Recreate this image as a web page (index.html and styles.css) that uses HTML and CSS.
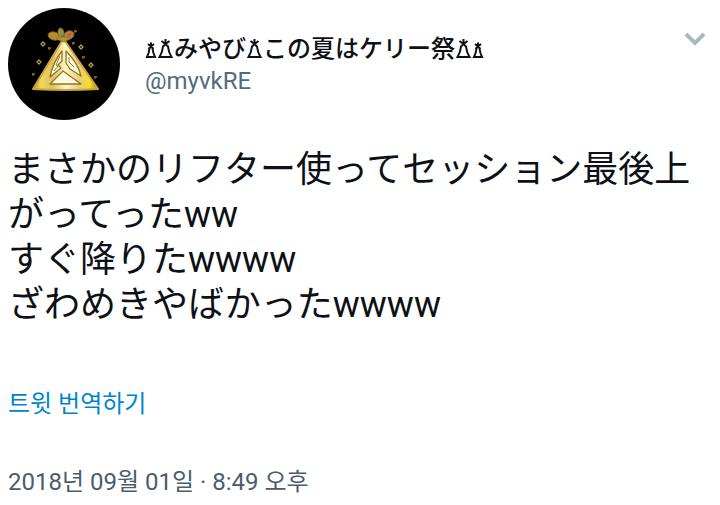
FILE: index.html
```
<!DOCTYPE html>
<html lang="ja">
<head>
    <meta charset="UTF-8">
    <meta name="viewport" content="width=device-width, initial-scale=1">
    <title>Tweet</title>
    <link rel="stylesheet" href="styles.css">
</head>
<body>
    <svg class="defs" aria-hidden="true">
        <symbol id="cone" viewBox="0 0 17 22">
            <path d="M4.5 3L8.5 6L12.5 3M8.5 1V6L5.5 9M8.5 6L11.5 9M6 8.5Q5.5 14 2.5 19H14.5Q11.5 14 11 8.5" />
        </symbol>
        <symbol id="cone-small" viewBox="0 0 12 22">
            <path d="M3 6L6 8.5L9 6M6 4.5V8.5L3.5 11M6 8.5L8.5 11M4.5 10.5Q4 15 2 19H10Q8 15 7.5 10.5" />
        </symbol>
    </svg>
    <article class="tweet">
        <header class="tweet-header">
            <svg class="avatar" viewBox="0 0 112 112" role="img" aria-label="avatar">
                <defs>
                    <linearGradient id="gold" x1="0" x2="1">
                        <stop offset="0" stop-color="#b99116" />
                        <stop offset="0.12" stop-color="#f0d75b" />
                        <stop offset="0.3" stop-color="#e0bf5e" />
                        <stop offset="0.5" stop-color="#fff6c8" />
                        <stop offset="0.72" stop-color="#e8cc75" />
                        <stop offset="0.87" stop-color="#f5de2c" />
                        <stop offset="1" stop-color="#b48a18" />
                    </linearGradient>
                </defs>
                <circle cx="56" cy="56" r="56" fill="#000" />
                <path d="M54 33L25 81Q57 83 90 81L57 33Z" fill="url(#gold)" stroke="#c9a23e" stroke-width="2" stroke-linejoin="round" />
                <g fill="#fff9dc" stroke="#8f7424" stroke-width="1.3" stroke-linejoin="round">
                    <path d="M54 43Q45 54 42 69L53 60L50 57L54 53Z" />
                    <path d="M58 43V55L62 61L73 68Q70 55 58 43Z" />
                    <path d="M55 63L42 76H73Z" />
                </g>
                <path d="M52 48L48 57L50 58L46 63M61 49V54L66 59" fill="none" stroke="#9b7d29" stroke-width="1" />
                <g stroke="#8c7726" stroke-width="0.8">
                    <ellipse cx="46" cy="28" rx="6" ry="4" transform="rotate(15 46 28)" fill="#b88a2c" />
                    <ellipse cx="53" cy="25" rx="3" ry="5" transform="rotate(-8 53 25)" fill="#8c9442" />
                    <ellipse cx="61" cy="27" rx="5" ry="4" transform="rotate(-20 61 27)" fill="#b88038" />
                    <path d="M48 31Q55 27 62 31L56 34Z" fill="#b99628" />
                </g>
                <path d="M60 29L63 25" stroke="#c04c57" stroke-width="2" />
                <circle cx="54" cy="28" r="1" fill="#4d7892" />
                <g fill="none" stroke="#b29b45" stroke-width="1.3">
                    <path d="M35 34L37 36L35 38L33 36ZM31 52L33 54L31 56L29 54ZM73 37L75 39L73 41L71 39ZM83 55L85 57L83 59L81 57Z" />
                    <path d="M41 39V42M40 40H43M65 34V37M64 35H67M67 22V25M66 23H69M75 48V51M74 49H77M25 65V68M24 66H27M87 68V71M86 69H89" stroke="#806b24" />
                </g>
            </svg>
            <div class="user">
                <div class="user-name"><svg class="cone small"><use href="#cone-small" /></svg><svg class="cone"><use href="#cone" /></svg><span>みやび</span><svg class="cone"><use href="#cone" /></svg><span>この夏はケリー祭</span><svg class="cone"><use href="#cone" /></svg><svg class="cone small"><use href="#cone-small" /></svg></div>
                <div class="user-id">@myvkRE</div>
            </div>
            <button class="menu" type="button" aria-label="menu">
                <svg width="22" height="14" viewBox="0 0 22 14"><path d="M2 2L11 11L20 2" /></svg>
            </button>
        </header>
        <p class="tweet-text">まさかのリフター使ってセッション最後上がってったww<br>すぐ降りたwwww<br>ざわめきやばかったwwww</p>
        <a class="translate" href="#" lang="ko">트윗 번역하기</a>
        <div class="date" lang="ko">2018년 09월 01일 · 8:49 오후</div>
    </article>
</body>
</html>
```
FILE: styles.css
```
body {
    margin: 0;
    background-color: #fff;
    color: #0d1116;
    font-family: Roboto, "Noto Sans CJK JP", sans-serif;
    font-size: 24px;
    line-height: 32px;
}
.defs {
    position: absolute;
    width: 0;
    height: 0;
}
.tweet {
    padding: 8px;
}
.tweet-header {
    display: flex;
    align-items: flex-start;
}
.avatar {
    flex: none;
    width: 112px;
    height: 112px;
    margin-right: 25px;
}
.user {
    flex: 1;
    padding-top: 25px;
}
.user-name {
    display: flex;
    align-items: center;
    font-weight: 500;
}
.cone {
    flex: none;
    width: 17px;
    height: 22px;
    fill: none;
    stroke: #0d1116;
    stroke-width: 2;
}
.small {
    width: 12px;
}
.user-id {
    color: #536b7e;
}
.menu {
    margin: 22px 4px 0 0;
    padding: 2px;
    border: 0;
    background: none;
}
.menu svg {
    display: block;
    fill: none;
    stroke: #aab8c2;
    stroke-width: 4;
}
.tweet-text {
    margin: 28px 0 60px;
    font-size: 36px;
    line-height: 45px;
}
.translate,
.date {
    display: block;
    font-family: Roboto, "Noto Sans CJK KR", sans-serif;
}
.translate {
    color: #0084cf;
    text-decoration: none;
}
.date {
    margin-top: 46px;
    color: #4b5d6c;
}
```
